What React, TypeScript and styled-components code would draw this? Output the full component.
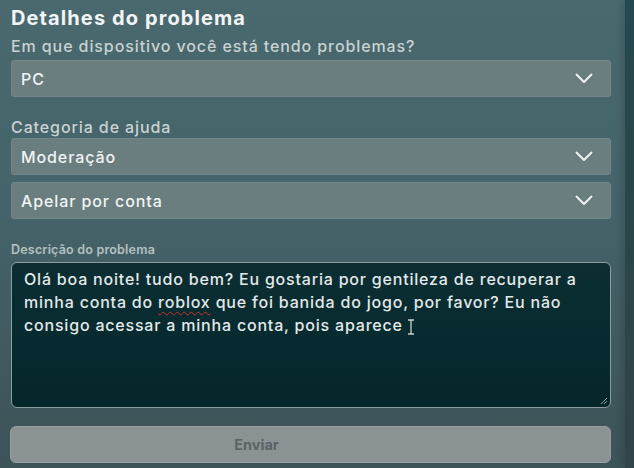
import styled, { createGlobalStyle } from "styled-components";

const GlobalStyle = createGlobalStyle`
  html, body {
    margin: 0;
    padding: 0;
    width: 634px;
    height: 468px;
    overflow: hidden;
    background: #3f5a5f;
  }
`;

const Page = styled.div`
  display: flex;
  width: 634px;
  height: 468px;
  font-family: Inter, "Noto Sans", sans-serif;
`;

const Panel = styled.div`
  flex: 1;
  display: flex;
  flex-direction: column;
  padding: 6px 14px 0 11px;
  background: linear-gradient(180deg, #49696e 0%, #45636a 45%, #3c5357 100%);
`;

const Edge = styled.div`
  width: 9px;
  background: linear-gradient(180deg, #24494f 0%, #2c4649 60%, #33444a 100%);
  box-shadow: -4px 0 6px rgba(0, 0, 0, 0.12);
`;

const Title = styled.h1`
  margin: 0;
  font-size: 20px;
  font-weight: 700;
  letter-spacing: 1.1px;
  line-height: 24px;
  color: #f2f5f5;
`;

const Label = styled.div<{ $small?: boolean; $gap?: number }>`
  margin-top: ${(p) => p.$gap ?? 0}px;
  font-size: ${(p) => (p.$small ? "12.5px" : "16px")};
  font-weight: ${(p) => (p.$small ? 600 : 500)};
  letter-spacing: ${(p) => (p.$small ? "0.2px" : "0.9px")};
  line-height: ${(p) => (p.$small ? "16px" : "20px")};
  color: ${(p) => (p.$small ? "#b4c0c1" : "#c9d2d3")};
`;

const Select = styled.div<{ $gap?: number }>`
  margin-top: ${(p) => p.$gap ?? 0}px;
  height: 37px;
  box-sizing: border-box;
  display: flex;
  align-items: center;
  justify-content: space-between;
  padding: 0 17px 0 9px;
  background: #6a7d7f;
  border: 1px solid #73878a;
  border-radius: 3px;
  font-size: 16px;
  font-weight: 500;
  letter-spacing: 0.9px;
  color: #f1f4f4;
`;

const Chevron = () => (
  <svg width="18" height="11" viewBox="0 0 18 11">
    <path d="M1.5 1.5 L9 9 L16.5 1.5" fill="none" stroke="#eef2f2" strokeWidth="2" strokeLinecap="round" strokeLinejoin="round" />
  </svg>
);

const TextBox = styled.div`
  position: relative;
  margin-top: 4px;
  height: 146px;
  box-sizing: border-box;
  padding: 5px 12px;
  background: linear-gradient(180deg, #0c2e33 0%, #062a2f 60%, #05262b 100%);
  border: 1.5px solid #8d9d9f;
  border-radius: 6px;
  font-size: 16px;
  font-weight: 500;
  letter-spacing: 0.8px;
  line-height: 23px;
  color: #e3e9e9;
  white-space: nowrap;
`;

const Misspelled = styled.span`
  text-decoration: underline wavy #d0302f;
  text-decoration-thickness: 1px;
  text-underline-offset: 3px;
`;

const Caret = styled.svg`
  vertical-align: -4px;
  margin-left: 4px;
`;

const Grip = styled.svg`
  position: absolute;
  right: 2px;
  bottom: 2px;
`;

const SendButton = styled.button`
  margin-top: 18px;
  height: 37px;
  width: 601px;
  margin-left: -1px;
  display: flex;
  align-items: center;
  justify-content: center;
  padding: 0 108px 0 0;
  background: #8b9294;
  border: 1px solid #979ea0;
  border-radius: 6px;
  font-family: inherit;
  font-size: 14.5px;
  font-weight: 700;
  color: #5b6366;
`;

export default function App() {
  return (
    <>
      <GlobalStyle />
      <Page>
        <Panel>
          <Title>Detalhes do problema</Title>
          <Label $gap={6}>Em que dispositivo você está tendo problemas?</Label>
          <Select $gap={4}>
            PC
            <Chevron />
          </Select>
          <Label $gap={20}>Categoria de ajuda</Label>
          <Select $gap={1}>
            Moderação
            <Chevron />
          </Select>
          <Select $gap={7}>
            Apelar por conta
            <Chevron />
          </Select>
          <Label $small $gap={23}>Descrição do problema</Label>
          <TextBox>
            Olá boa noite! tudo bem? Eu gostaria por gentileza de recuperar a
            <br />
            minha conta do <Misspelled>roblox</Misspelled> que foi banida do jogo, por favor? Eu não
            <br />
            consigo acessar a minha conta, pois aparece
            <Caret width="8" height="16" viewBox="0 0 8 16">
              <path d="M1 1 H7 M4 1 V15 M1 15 H7" fill="none" stroke="#c9d0d0" strokeWidth="1.3" />
            </Caret>
            <Grip width="8" height="8" viewBox="0 0 8 8">
              <path d="M7 1 L1 7 M7 4 L4 7" stroke="#8d9d9f" strokeWidth="1" />
            </Grip>
          </TextBox>
          <SendButton>Enviar</SendButton>
        </Panel>
        <Edge />
      </Page>
    </>
  );
}
